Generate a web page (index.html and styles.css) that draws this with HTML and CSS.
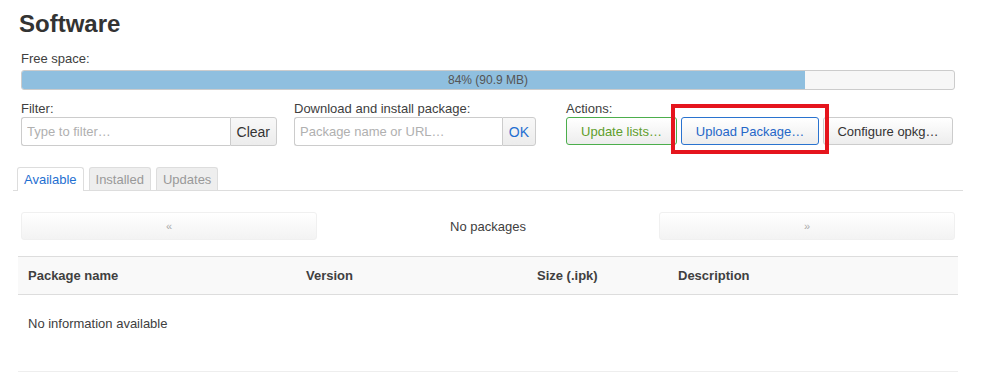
FILE: index.html
```html
<!DOCTYPE html>
<html lang="en">
<head>
  <meta charset="UTF-8" />
  <title>Software</title>
  <link rel="stylesheet" href="styles.css">
</head>
<body>
  <div class="main">
    <h2>Software</h2>

    <div class="section">
      <div class="label">Free space:</div>
      <div class="progress">
        <div class="progress-fill" style="width: 84%"></div>
        <div class="progress-text">84% (90.9 MB)</div>
      </div>

      <div class="controls">
        <div class="control filter">
          <div class="label">Filter:</div>
          <div class="input-group">
            <input type="text" placeholder="Type to filter…" />
            <button class="addon">Clear</button>
          </div>
        </div>
        <div class="control install">
          <div class="label">Download and install package:</div>
          <div class="input-group">
            <input type="text" placeholder="Package name or URL…" />
            <button class="addon ok">OK</button>
          </div>
        </div>
        <div class="control actions">
          <div class="label">Actions:</div>
          <div class="btn-row">
            <button class="btn btn-green">Update lists…</button>
            <span class="highlight">
              <button class="btn btn-blue">Upload Package…</button>
            </span>
            <button class="btn btn-plain">Configure opkg…</button>
          </div>
        </div>
      </div>
    </div>

    <ul class="tabs">
      <li class="active">Available</li>
      <li>Installed</li>
      <li>Updates</li>
    </ul>

    <div class="pager">
      <button class="page-btn">&laquo;</button>
      <div class="page-info">No packages</div>
      <button class="page-btn">&raquo;</button>
    </div>

    <table class="pkg-table">
      <thead>
        <tr>
          <th class="col-name">Package name</th>
          <th class="col-version">Version</th>
          <th class="col-size">Size (.ipk)</th>
          <th>Description</th>
        </tr>
      </thead>
      <tbody>
        <tr>
          <td colspan="4" class="empty">No information available</td>
        </tr>
      </tbody>
    </table>
  </div>
</body>
</html>
```

FILE: styles.css
```css
body { margin: 0; font-family: "Liberation Sans", Arial, sans-serif; font-size: 13px; color: #404040; background: #fff; }
.main { width: 940px; margin-left: 18px; }
h2 { margin: 0; padding: 10px 0 0 1px; font-size: 24px; line-height: 28px; font-weight: bold; color: #333; }

.section { padding: 13px 3px 0; }
.label { line-height: 16px; height: 16px; color: #404040; }

.progress { position: relative; height: 18px; margin-top: 3px; border: 1px solid #ccc; border-radius: 3px; background: #f7f7f7; overflow: hidden; }
.progress-fill { height: 100%; background: #8fbfdf; }
.progress-text { position: absolute; top: 0; left: 0; right: 0; line-height: 18px; text-align: center; color: #555; font-size: 12px; }

.controls { display: flex; margin-top: 11px; }
.filter { width: 256px; margin-right: 17px; }
.install { width: 242px; margin-right: 30px; }
.actions { flex: 1; }

.input-group { display: flex; height: 29px; }
.input-group input { flex: 1; min-width: 0; box-sizing: border-box; height: 29px; padding: 0 5px; border: 1px solid #ccc; border-right: none; border-radius: 3px 0 0 3px; font-family: inherit; font-size: 13px; color: #404040; }
.input-group input::placeholder { color: #b0b0b0; }
.addon { height: 29px; padding: 0 6px; border: 1px solid #ccc; border-radius: 0 3px 3px 0; background: linear-gradient(#f8f8f8, #ececec); font-family: inherit; font-size: 14px; color: #333; }
.addon.ok { color: #1f6fd1; }

.btn-row { display: flex; gap: 4px; }
.btn { height: 28px; padding: 0; white-space: nowrap; border: 1px solid #ccc; border-radius: 3px; background: linear-gradient(#fff, #ededed); font-family: inherit; font-size: 13px; color: #333; }
.btn-green { width: 111px; border-color: #4cae4c; color: #5f9e2c; }
.btn-blue { width: 138px; border-color: #2a73cf; color: #2567c8; }
.btn-plain { width: 130px; }
.highlight { position: relative; display: inline-block; height: 28px; }
.highlight::after { content: ""; position: absolute; top: -13px; bottom: -9px; left: -10px; right: -10px; border: 4px solid #e5151d; }

.tabs { display: flex; margin: 21px -5px 0; padding: 0 0 0 4px; list-style: none; border-bottom: 1px solid #ddd; }
.tabs li { margin-right: 5px; padding: 0 6px; height: 22px; line-height: 24px; border: 1px solid #ddd; border-bottom: none; border-radius: 3px 3px 0 0; background: #eee; color: #999; font-size: 13px; }
.tabs li.active { background: #fff; color: #1f6fd1; height: 23px; margin-bottom: -1px; }

.pager { display: flex; align-items: center; margin: 21px 3px 0; }
.page-btn { width: 296px; height: 28px; border: 1px solid #f0f0f0; border-radius: 3px; background: linear-gradient(#fff, #f3f3f3); color: #aaa; font-size: 11px; font-family: inherit; }
.page-info { flex: 1; text-align: center; font-size: 13px; color: #404040; }

.pkg-table { width: 100%; margin-top: 16px; border-collapse: collapse; }
.pkg-table th { height: 37px; padding: 0 10px; text-align: left; font-weight: bold; background: #f9f9f9; border-top: 1px solid #ddd; border-bottom: 1px solid #ddd; color: #404040; }
.pkg-table .col-name { width: 258px; }
.pkg-table .col-version { width: 211px; }
.pkg-table .col-size { width: 121px; }
.pkg-table td.empty { padding: 21px 10px 39px; line-height: 16px; vertical-align: top; border-bottom: 1px solid #eee; }
```
